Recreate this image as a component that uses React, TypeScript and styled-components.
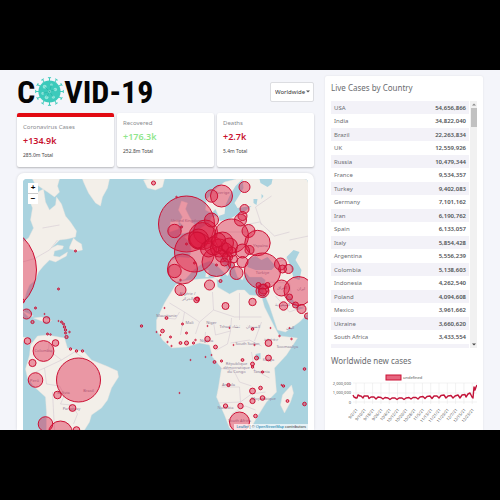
import React from 'react';
import styled, { createGlobalStyle } from 'styled-components';

const GlobalStyle = createGlobalStyle`
  * { box-sizing: border-box; }
  body {
    margin: 0;
    background: #000;
    font-family: "Noto Sans", "Open Sans", sans-serif;
    color: #6a6c70;
  }
  button, select { font-family: inherit; }
`;

const Stage = styled.div`
  height: 100vh;
  padding: 70px 0;
  background: #000;
`;

const Page = styled.main`
  display: grid;
  grid-template-columns: minmax(0, 297fr) minmax(0, 158fr);
  gap: 11px;
  height: 100%;
  padding: 0 17px;
  background: #f4f5fa;
  overflow: hidden;
`;

const Left = styled.section`
  min-height: 0;
  display: flex;
  flex-direction: column;
`;

const Header = styled.header`
  display: flex;
  justify-content: space-between;
  align-items: center;
  height: 43px;
  flex: none;
`;

const Logo = styled.h1`
  display: flex;
  align-items: center;
  margin: 0;
  font: bold 32px/40px "Roboto Condensed", "Open Sans Condensed", "Roboto", sans-serif;
  color: #050505;
`;

const VirusIcon = styled.svg`
  width: 29px;
  height: 31px;
  flex: none;
`;

const SelectBox = styled.label`
  display: flex;
  align-items: center;
  width: 44px;
  height: 20px;
  padding: 0 3px 0 4px;
  background: #fff;
  border: 1px solid #dcdde1;
  border-radius: 2px;
`;

const Select = styled.select`
  flex: 1;
  min-width: 0;
  appearance: none;
  border: 0;
  padding: 0;
  background: transparent;
  font-size: 6px;
  color: #333;
`;

const Caret = styled.svg`
  width: 4px;
  height: 3px;
  flex: none;
`;

const Stats = styled.div`
  display: grid;
  grid-template-columns: repeat(3, 1fr);
  gap: 3px;
  flex: none;
`;

const StatCard = styled.button<{ $active?: boolean }>`
  display: flex;
  flex-direction: column;
  height: 54px;
  padding: 4px 6px;
  border: 0;
  border-top: ${p => (p.$active ? '4px solid #e20a12' : '0')};
  border-radius: 2px;
  background: #fff;
  box-shadow: 0 1px 2px rgba(0, 0, 0, 0.25);
  text-align: left;
`;

const StatLabel = styled.span`
  font-size: 6px;
  line-height: 12px;
  color: #8a8c90;
`;

const StatValue = styled.strong<{ $green?: boolean }>`
  font-size: 9px;
  line-height: 16px;
  font-weight: 600;
  color: ${p => (p.$green ? '#90e68c' : '#c8102e')};
`;

const StatTotal = styled.span`
  font-size: 5px;
  line-height: 13px;
  color: #444;
`;

const MapCard = styled.div`
  flex: 1;
  min-height: 0;
  margin-top: 6px;
  padding: 6px 6px 0;
  border-radius: 7px 7px 0 0;
  background: #fff;
  box-shadow: 0 0 3px rgba(0, 0, 0, 0.12);
`;

const MapFrame = styled.div`
  position: relative;
  height: 100%;
  border-radius: 4px 4px 0 0;
  overflow: hidden;
  background: #aad3df;
`;

const MapDrawing = styled.svg`
  display: block;
  width: 100%;
  height: 100%;
`;

const ZoomControls = styled.div`
  position: absolute;
  top: 4px;
  left: 5px;
  display: flex;
  flex-direction: column;
  gap: 1px;
  background: #ccc;
`;

const ZoomButton = styled.button`
  width: 10px;
  height: 10px;
  padding: 0;
  border: 0;
  background: #fff;
  font: bold 8px/10px "Liberation Sans", sans-serif;
  color: #000;
`;

const Attribution = styled.div`
  position: absolute;
  right: 0;
  bottom: 0;
  padding: 0 2px;
  background: rgba(255, 255, 255, 0.7);
  font: 4px/6px "Liberation Sans", sans-serif;
  color: #333;
  a { color: #0078a8; text-decoration: none; }
`;

const Right = styled.aside`
  min-height: 0;
  margin-top: 6px;
  padding: 4px 6px 0;
  background: #fff;
  border-radius: 2px 2px 0 0;
  box-shadow: 0 0 2px rgba(0, 0, 0, 0.1);
`;

const Heading = styled.h2`
  margin: 0;
  font-size: 8px;
  line-height: 16px;
  font-weight: 400;
  color: #6a6c70;
`;

const ScrollArea = styled.div`
  display: flex;
  gap: 1px;
  height: 247px;
  margin: 5px 0;
  overflow: hidden;
`;

const Cases = styled.table`
  flex: 1;
  align-self: flex-start;
  border-collapse: collapse;
  font-size: 6px;
`;

const CaseRow = styled.tr`
  height: 13px;
  &:nth-child(odd) { background: #f3f2f8; }
  &:nth-child(even) { height: 14px; }
`;

const Country = styled.th`
  padding: 0 3px;
  font-weight: 400;
  line-height: 12px;
  text-align: left;
`;

const Count = styled.td`
  padding: 0 3px;
  font-weight: 600;
  line-height: 12px;
  text-align: right;
  color: #505256;
`;

const ScrollTrack = styled.div`
  display: flex;
  flex-direction: column;
  align-items: center;
  width: 7px;
  padding: 2px 0;
  gap: 2px;
  background: #f1f1f1;
`;

const Thumb = styled.div`
  width: 6px;
  height: 19px;
  margin-bottom: auto;
  background: #c1c1c1;
`;

const Chart = styled.svg`
  display: block;
  width: 100%;
  height: auto;
`;

const rows: [string, string][] = [
  ['USA', '54,656,866'], ['India', '34,822,040'], ['Brazil', '22,263,834'],
  ['UK', '12,559,926'], ['Russia', '10,479,344'], ['France', '9,534,357'],
  ['Turkey', '9,402,083'], ['Germany', '7,101,162'], ['Iran', '6,190,762'],
  ['Spain', '6,133,057'], ['Italy', '5,854,428'], ['Argentina', '5,556,239'],
  ['Colombia', '5,138,603'], ['Indonesia', '4,262,540'], ['Poland', '4,094,608'],
  ['Mexico', '3,961,662'], ['Ukraine', '3,660,620'], ['South Africa', '3,433,554'],
  ['Netherlands', '3,101,361'],
];

const land = [
  'M33 179L60 179L58 186L60 192L55 197L48 192L42 188L35 183Z',
  'M40 191L44 189L46 202L50 210L56 205L57 197L62 204L66 216L71 222L77 231L76 237L68 239L60 240L52 248L58 245L64 246L63 249L55 251L54 256L60 257L68 252L67 256L56 262L50 260L44 266L39 272L36 280L30 285L27 292L25 300L23 303L23 242L29 238L34 228L31 220L33 208L29 198L34 196Z',
  'M70 247L74 238L77 241L82 244L83 250L78 251L70 249Z',
  'M83 179L110 179L108 188L103 197L101 206L96 203L89 193L84 182Z',
  'M144 180L150 179L165 179L163 187L156 190L148 188Z',
  'M26 369L30 355L31 345L38 336L48 335L65 338L68 348L85 352L92 360L107 366L118 371L119 377L112 388L108 400L102 408L92 415L90 422L85 430L47 430L47 413L46 397L35 387L28 378Z',
  'M23 337L29 338L32 343L29 345L23 341Z M34 318L42 317L52 320L50 322L42 321Z M23 311L30 314L34 316L29 317Z',
  'M173 290L165 303L157 320L157 330L163 340L172 348L187 347L200 343L210 345L213 357L222 368L219 387L217 397L225 415L230 428L234 431L250 431L257 418L267 402L277 392L276 380L275 368L287 355L298 338L280 336L275 327L265 307L262 296L250 295L245 290L238 290L230 294L218 287L217 278L200 279L183 281L176 285Z',
  'M237 179L225 182L215 190L207 200L206 210L212 213L216 209L219 216L212 217L210 223L203 227L195 232L185 237L190 242L192 250L190 258L180 257L171 261L170 276L176 282L186 279L194 270L202 264L210 261L216 264L222 270L228 276L230 272L224 264L220 257L226 257L234 265L238 277L243 280L246 272L250 277L262 277L266 280L264 292L270 306L278 330L286 332L300 322L309 313L309 179Z',
  'M182 201L188 203L186 209L190 217L195 225L191 232L180 234L184 226L180 222L183 217L179 210Z M171 222L179 220L179 229L170 232Z',
  'M292 385L294 393L291 402L285 413L281 405L283 395Z',
  'M207 270L209 270L209 277L206 277Z M214 277L221 276L220 281Z',
];
const water = [
  'M243 179L236 186L230 196L226 205L225 214L219 216L220 221L230 219L237 215L246 211L252 206L238 208L235 203L240 195L244 188Z',
  'M249 259L256 256L262 260L268 257L276 266L272 270L256 270L248 267Z',
  'M287 257L294 250L300 252L296 260L302 270L300 280L294 278L291 266Z',
  'M260 179L273 179L272 184L268 187L261 183Z M254 199L258 199L257 205L254 203Z M262 194L264 196L262 199Z',
  'M287 294L292 298L298 306L305 308L298 310L290 301Z',
  'M256 354L261 353L261 359L257 360Z',
];
const borders = [
  'M170 303L185 312L200 322L214 310L213 292M214 310L235 317L262 317M240 293L240 320M200 322L196 334M185 312L181 335M214 322L216 335L231 331L232 318M231 331L228 344L217 350M231 343L250 340L262 346M262 322L255 341M218 368L234 370L240 382L252 386M222 387L240 387L241 402L218 403M241 402L252 394L266 392M232 414L246 406L256 410M252 352L255 370L270 378M165 318L176 319L180 312M205 343L206 332',
  'M50 340L49 350L62 360L45 368L47 384L60 386L65 395L61 404L72 405L78 414L74 424M62 360L75 352L84 358M36 372L45 368M53 392L55 430',
  'M43 228L60 225M36 258L50 250L58 240M23 262L37 258M225 232L250 232M240 226L260 222L275 236L290 232M278 262L290 258M268 282L290 283L292 296M290 240L309 236M226 246L250 244M198 245L212 240M276 296L290 312L306 306M262 225L256 207L272 196',
];

const circles: [number, number, number][] = [
  [-9, 270, 46], [154, 183, 2], [76, 251, 1], [59, 289, 1],
  [27, 314, 5], [36, 308, 1], [45, 314, 0.6], [33, 322, 1.6], [47, 320, 3.4], [23, 301, 2],
  [28, 341, 3.3], [44, 351, 10.4], [56, 343, 3.3], [33, 363, 3.6], [36, 380, 7.3], [79, 380, 22],
  [58, 395, 3.8], [73, 408, 3.4], [46, 424, 7.3], [61, 433, 12], [77, 430, 3.3],
  [71, 349, 1.2], [77, 351, 1.2], [83, 351, 1.2], [67, 337, 1.6],
  [59, 321, 0.6], [62, 322, 1], [64, 324, 1], [65, 327, 1.2], [66, 330, 1.2], [66, 333, 1], [70, 332, 0.8],
  [48, 334, 1], [51, 334.5, 0.8], [142, 326, 1.2],
  [187, 224, 28], [175, 231, 6.7], [177, 197, 0.8], [182, 227, 1], [212, 196, 6.2], [222, 196, 11],
  [203, 236, 13.5], [206, 232, 12], [212, 220, 7], [195, 252, 20], [183, 269, 15], [175, 271, 6.7],
  [181, 290, 5.5], [210, 285, 5], [221, 281, 1.5], [217, 262, 14.5], [199, 239, 10], [198, 240, 8],
  [232, 236, 17], [198, 299, 2], [209, 249, 8], [214, 246, 9], [220, 248, 9], [223, 243, 11],
  [226, 250, 7], [230, 246, 8], [222, 256, 6], [228, 257, 5], [232, 252, 5], [219, 240, 7],
  [187, 244, 1], [195, 263, 1], [181, 280, 0.8], [217, 265, 1], [225, 262, 4], [234, 259, 4], [232, 265, 3],
  [245, 187, 5.5], [245, 209, 4.5], [241, 220, 6], [243, 216, 4.5], [249, 231, 6.5], [258, 243, 12.7],
  [263, 271, 18], [281, 264, 6], [289, 269, 4.5], [283, 269, 4], [282, 288, 8], [299, 291, 14.5],
  [263, 291, 6.5], [264, 289, 5], [263, 292, 4], [259, 285, 2.5], [268, 285, 2.5], [237, 273, 6.5],
  [250, 250, 4.5], [243, 251, 7], [243, 262, 5.5], [290, 297, 3],
  [197, 300, 2.7], [226, 306, 3.5], [253, 302, 3.7], [284, 306, 4.2], [302, 309, 4.5], [296, 305, 3],
  [308, 316, 3], [163, 331, 1.8], [167, 318, 1.4], [165, 308, 0.6], [183, 324, 1], [187, 333, 1],
  [171, 337, 1], [168, 342, 0.7], [172, 346, 0.7], [181, 343, 1.4], [187, 343, 2], [194, 343, 1.1],
  [196, 340, 0.8], [208, 339, 2.7], [216, 347, 1.9], [215, 362, 1.4], [222, 361, 1.1], [243, 360, 1.4],
  [253, 364, 1.9], [253, 367, 1.2], [257, 358, 2], [269, 343, 3.4], [269, 358, 2.9], [253, 329, 1.3],
  [263, 372, 1.1], [261, 388, 1.8], [253, 391, 2.9], [263, 398, 2.3], [253, 401, 2.6], [241, 406, 2.7],
  [226, 406, 2.1], [229, 385, 1.6], [256, 416, 1.8], [240, 422, 10], [288, 401, 1.4], [284, 386, 1.2],
  [282, 385, 0.6], [305, 404, 1.8], [305, 369, 1.3], [191, 360, 0.6], [206, 357, 0.6], [212, 355, 0.6],
  [180, 393, 0.6], [230, 328, 0.6], [234, 345, 0.6], [255, 345, 0.7], [280, 336, 0.8], [292, 339, 0.8],
  [290, 328, 0.6], [271, 328, 0.6], [208, 326, 0.6], [157, 332, 0.6], [161, 335, 0.6],
];

const places: [number, number, string][] = [
  [188, 295, 'Algérie /'], [188, 300, 'الجزائر'], [190, 324, 'Mali'], [212, 324, 'Niger'],
  [230, 328, 'Tchad تشاد'], [253, 328, 'السودان'], [167, 317, 'Mauritanie'], [207, 342, 'Nigeria'],
  [248, 345, 'South Sudan'], [271, 341, 'ኢትዮጵያ'], [288, 348, 'Soomaaliya'], [269, 361, 'Kenya'],
  [237, 365, 'République'], [237, 369, 'démocratique'], [237, 373, 'du Congo'], [262, 373, 'Tanzania'],
  [229, 386, 'Angola'], [264, 400, 'Moçambique'], [226, 409, 'Namibia'], [240, 422, 'South Africa'],
  [89, 392, 'Brasil'], [35, 382, 'Perú'], [44, 352, 'Colombia'], [72, 410, 'Paraguay'], [64, 394, 'Bolivia'],
  [263, 274, 'Türkiye'], [261, 247, 'Україна'], [282, 289, 'العراق'], [301, 290, 'ایران'],
  [283, 306, 'السعودية'], [290, 329, 'اليمن'], [223, 194, 'Sverige'], [187, 222, 'United Kingdom'],
];

const ticks = ['9/2/21', '9/10/21', '9/18/21', '9/26/21', '10/4/21', '10/12/21', '10/20/21', '10/28/21',
  '11/5/21', '11/13/21', '11/21/21', '11/29/21', '12/7/21', '12/15/21', '12/23/21'];
const tickX = (i: number) => 25 + i * 8.3;

const line =
  'M25 21L26 23L28 24L29 24L30 21L32 22L33 22L35 24L36 22L38 22L40 22L41 24.500L43 23L46 23L48 25L50 23L53 23.500L55 25L57 23.500L60 24L62 25.500L64 24L67 24L69 25.500L71 24L74 24L76 25.500L78 24L81 23.500L83 25L85 23.500L88 23.500L90 25L92 23L95 22.500L97 24.500L99 22.500L102 22L104 24.500L106 22L109 22L111 24L113 21.500L116 21L118 24L120 22L123 21.500L125 24L127 22L130 21L132 24L134 21L137 20.500L138 23L140 20L142 19L144 23L145 24L146 13L147 16L148 13L149 11';

const spikes = Array.from({ length: 12 }, (_, i) => i * 30);

function Virus() {
  return (
    <VirusIcon viewBox="-15 -16 30 32" aria-label="O" role="img">
      {spikes.map(a => (
        <g key={a} transform={`rotate(${a})`} stroke="#3ccabb" fill="none">
          <path d="M0 -10V-14" strokeWidth="1" />
          <path d="M-1.200 -14.300H1.200" strokeWidth="1" strokeLinecap="round" />
        </g>
      ))}
      <circle r="11.500" fill="#3ccabb" />
      <g fill="#92e7dc">
        <circle cx="-5" cy="-5" r="2" /><circle cx="2" cy="-7" r="1.300" /><circle cx="6" cy="-2" r="1.800" />
        <circle cx="0" cy="0" r="1.700" /><circle cx="-7" cy="2" r="1.400" /><circle cx="-3" cy="6" r="1.900" />
        <circle cx="4" cy="6" r="1.500" />
      </g>
      <path d="M-5 -5L0 0L6 -2M0 0L-3 6M-7 2L0 0M2 -7L0 0L4 6" stroke="#22a99d" strokeWidth=".5" fill="none" />
    </VirusIcon>
  );
}

function WorldMap() {
  return (
    <MapDrawing viewBox="23 179 286 251" preserveAspectRatio="xMidYMid slice" role="img" aria-label="Cases map">
      <rect x="-200" y="0" width="900" height="800" fill="#aad3df" />
      {land.map(d => <path key={d} d={d} fill="#f3efe9" stroke="#e5e3df" strokeWidth=".4" />)}
      {water.map(d => <path key={d} d={d} fill="#aad3df" />)}
      {borders.map(d => <path key={d} d={d} fill="none" stroke="#cfc3cf" strokeWidth=".5" />)}
      <g fontSize="4" fill="#8d7f99" textAnchor="middle">
        {places.map(([x, y, name]) => <text key={name} x={x} y={y}>{name}</text>)}
      </g>
      <g fill="#dc143c" fillOpacity=".4" stroke="#cc1034">
        {circles.map(([x, y, r], i) => <circle key={i} cx={x} cy={y} r={r} strokeWidth={r < 1 ? 0.8 : 1} />)}
      </g>
    </MapDrawing>
  );
}

function CasesChart() {
  return (
    <Chart viewBox="0 0 146 60" role="img" aria-label="Worldwide new cases">
      <rect x="55" y="6" width="15" height="5" fill="#e5667f" stroke="#cc1034" />
      <g fontSize="4" fill="#555">
        <text x="72" y="10">undefined</text>
        <g textAnchor="end">
          <text x="20" y="16">2,000,000</text>
          <text x="20" y="25">1,000,000</text>
          <text x="20" y="35">0</text>
        </g>
        {ticks.map((t, i) => (
          <text key={t} textAnchor="end" transform={`translate(${tickX(i) + 2} 41) rotate(-50)`}>{t}</text>
        ))}
      </g>
      <g stroke="#e4e4e4" strokeWidth=".5">
        {[14, 24, 33].map(y => <path key={y} d={`M22 ${y}H146`} />)}
        {ticks.map((t, i) => <path key={t} d={`M${tickX(i)} 14V35`} />)}
      </g>
      <path d={line} transform="translate(-3 5)" fill="none" stroke="#c3143a" strokeWidth="1.400" strokeLinejoin="round" />
    </Chart>
  );
}

export default function App() {
  return (
    <>
      <GlobalStyle />
      <Stage>
        <Page>
          <Left>
            <Header>
              <Logo>C<Virus />VID-19</Logo>
              <SelectBox>
                <Select aria-label="Country" defaultValue="Worldwide">
                  <option>Worldwide</option>
                </Select>
                <Caret viewBox="0 0 4 3"><path d="M0 .5H4L2 2.500Z" fill="#555" /></Caret>
              </SelectBox>
            </Header>
            <Stats>
              <StatCard $active>
                <StatLabel>Coronavirus Cases</StatLabel>
                <StatValue>+134.9k</StatValue>
                <StatTotal>285.0m Total</StatTotal>
              </StatCard>
              <StatCard>
                <StatLabel>Recovered</StatLabel>
                <StatValue $green>+176.3k</StatValue>
                <StatTotal>252.8m Total</StatTotal>
              </StatCard>
              <StatCard>
                <StatLabel>Deaths</StatLabel>
                <StatValue>+2.7k</StatValue>
                <StatTotal>5.4m Total</StatTotal>
              </StatCard>
            </Stats>
            <MapCard>
              <MapFrame>
                <WorldMap />
                <ZoomControls>
                  <ZoomButton aria-label="Zoom in">+</ZoomButton>
                  <ZoomButton aria-label="Zoom out">−</ZoomButton>
                </ZoomControls>
                <Attribution>
                  <a href="#leaflet">Leaflet</a> | © <a href="#osm">OpenStreetMap</a> contributors
                </Attribution>
              </MapFrame>
            </MapCard>
          </Left>
          <Right>
            <Heading>Live Cases by Country</Heading>
            <ScrollArea>
              <Cases>
                <tbody>
                  {rows.map(([name, count]) => (
                    <CaseRow key={name}>
                      <Country scope="row">{name}</Country>
                      <Count>{count}</Count>
                    </CaseRow>
                  ))}
                </tbody>
              </Cases>
              <ScrollTrack>
                <Caret viewBox="0 0 4 3"><path d="M0 2.500H4L2 .5Z" fill="#888" /></Caret>
                <Thumb />
                <Caret viewBox="0 0 4 3"><path d="M0 .5H4L2 2.500Z" fill="#444" /></Caret>
              </ScrollTrack>
            </ScrollArea>
            <Heading>Worldwide new cases</Heading>
            <CasesChart />
          </Right>
        </Page>
      </Stage>
    </>
  );
}
